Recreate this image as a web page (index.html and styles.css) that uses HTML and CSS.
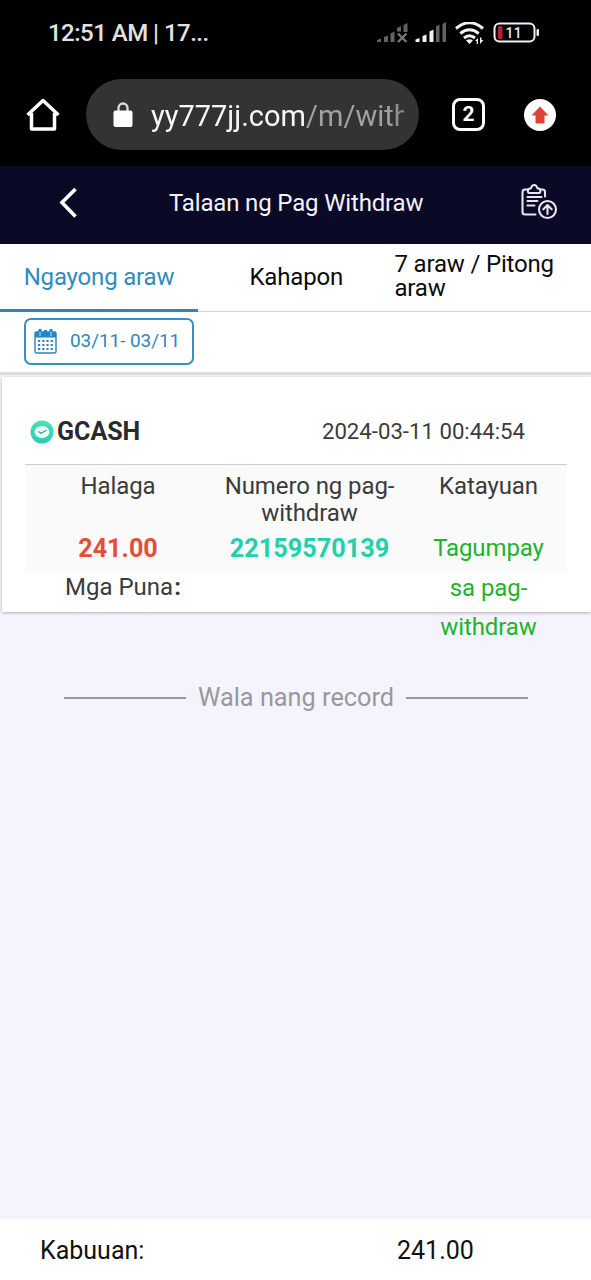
FILE: index.html
```html
<!DOCTYPE html>
<html lang="fil">
<head>
<meta charset="utf-8">
<title>Talaan ng Pag Withdraw</title>
<link rel="stylesheet" href="styles.css">
</head>
<body>
<div class="screen">
  <div class="status-bar">
    <span class="clock">12:51 AM | 17...</span>
    <svg class="status-icons" width="164" height="26" viewBox="0 0 164 26">
      <g fill="#626262">
        <path d="M1 18l4-1.500V20H1zM8 15l4-1.500V20H8zM14.500 11.500l4-2V20h-4zM21 6l4-2v5.500h-4zM27.500 3l4-2v9h-4z"/>
        <path d="M22 11.500l8.500 8.500M30.500 11.500L22 20" stroke="#777" stroke-width="2.400"/>
        <path d="M60 4.500l3.500-2V20H60zM66.500 2l3.500-2v20h-3.500z"/>
      </g>
      <path fill="#f2f2f2" d="M39.500 17.500l4-1.500v4h-4zM46.500 14l4-1.500V20h-4zM53.500 9.500l4-2V20h-4z"/>
      <g fill="none" stroke="#f2f2f2" stroke-width="3">
        <path d="M80 6.500Q93.500-5 107 6.500"/>
        <path d="M84.300 11.500Q93.500 4 102.700 11.500"/>
        <path d="M88 16Q93.500 11.500 99 16"/>
      </g>
      <path fill="#f2f2f2" d="M90 18.500q3.500-2.500 7 0L93.500 22zM99 19l3-3v6h-1.300v-3zM104 15.500V22l3.500-4h-2v-2.500z"/>
      <rect x="118.500" y="1.500" width="40" height="18" rx="5" fill="none" stroke="#f2f2f2" stroke-width="2"/>
      <rect x="122" y="4" width="4.500" height="13" rx="1.500" fill="#bd1f32"/>
      <rect x="160.500" y="7" width="2.500" height="7" rx="1" fill="#f2f2f2"/>
      <text class="battery-level" x="129.500" y="16">11</text>
    </svg>
  </div>

  <div class="browser-bar">
    <svg class="home" width="34" height="36" viewBox="0 0 34 36">
      <path d="M1.500 18L17 3.500 32.500 18M5.500 16V32h23V16" fill="none" stroke="#fff" stroke-width="3.500" stroke-linejoin="round"/>
    </svg>
    <div class="address">
      <svg class="lock" width="20" height="26" viewBox="0 0 20 26">
        <path d="M5.500 10V6a4.500 4.500 0 0 1 9 0v4" fill="none" stroke="#ddd" stroke-width="2.300"/>
        <rect x=".5" y="8.500" width="19" height="16.500" rx="2" fill="#fff"/>
      </svg>
      <div class="url">yy777jj.com<span class="url-path">/m/with</span></div>
    </div>
    <div class="tab-count">2</div>
    <svg class="update" width="32" height="32" viewBox="0 0 32 32">
      <circle cx="16" cy="16" r="16" fill="#fff"/>
      <path d="M16 7.500l8.500 9H20.500v8h-9v-8H7.500z" fill="#dc4437"/>
    </svg>
  </div>

  <header class="page-header">
    <svg class="back" width="20" height="32" viewBox="0 0 20 32">
      <path d="M17.500 2L4 15.500 17.500 29.500" fill="none" stroke="#fff" stroke-width="3.600"/>
    </svg>
    <h1 class="title">Talaan ng Pag Withdraw</h1>
    <svg class="report" width="37" height="37" viewBox="0 0 37 37">
      <g fill="none" stroke="#e6e6f2" stroke-width="2.100" stroke-linecap="round" stroke-linejoin="round">
        <path d="M7 5.500H4Q1.500 5.500 1.500 8.500V28Q1.500 30.500 4 30.500H14.500"/>
        <path d="M19 5.500h2.500Q24 5.500 24 8v4.500"/>
        <path d="M7 8V5.500L10 4Q11 1 13.200 1T16.300 4l3 1.500V8Q19.300 9 18 9H8.500Q7 9 7 8z"/>
        <path d="M6.500 13h14M6.500 17h10M6.500 21.500h7"/>
        <circle cx="26.500" cy="25.500" r="8.500"/>
        <path d="M26.500 30V21.500M22.300 25.200L26.500 21l4.200 4.200"/>
      </g>
    </svg>
  </header>

  <nav class="tabs">
    <div class="tab active"><span class="tab-today">Ngayong araw</span></div>
    <div class="tab"><span class="tab-yesterday">Kahapon</span></div>
    <div class="tab tab-week"><span>7 araw / Pitong<br>araw</span></div>
  </nav>

  <div class="filter">
    <div class="date-range">
      <svg width="23" height="25" viewBox="0 0 23 25">
        <rect x="1" y="3" width="21" height="21" rx="1.500" fill="#fff" stroke="#2b83b8" stroke-width="1.400"/>
        <path d="M1 3h21v5.500H1z" fill="#2387c8"/>
        <path d="M6 0v6M11.500 1v4M17 0v6" stroke="#2387c8" stroke-width="3"/>
        <path d="M6 3v4M17 3v4" stroke="#a9d8f4" stroke-width="1.200"/>
        <path d="M4 12h16M4 16h16M4 20h16" stroke="#2b83b8" stroke-width="2" stroke-dasharray="2.200 2"/>
      </svg>
      <span class="dates">03/11- 03/11</span>
    </div>
  </div>

  <main class="content">
    <section class="record">
      <div class="record-head">
        <svg width="24" height="24" viewBox="0 0 24 24">
          <defs><linearGradient id="mint" x1="0" y1="0" x2="0" y2="1"><stop offset="0" stop-color="#48e3b0"/><stop offset="1" stop-color="#26cdbb"/></linearGradient></defs>
          <circle cx="12" cy="12" r="11.500" fill="url(#mint)"/>
          <ellipse cx="12" cy="12" rx="7.500" ry="6" fill="#effff9"/>
          <path d="M8.500 11.500l2.500 1.700 5.500-3" fill="none" stroke="#3b9b87" stroke-width="1.300"/>
        </svg>
        <strong class="method">GCASH</strong>
        <time class="time">2024-03-11 00:44:54</time>
      </div>
      <div class="details">
        <div class="col"><div class="label">Halaga</div><div class="value amount">241.00</div></div>
        <div class="col col-number"><div class="label label-number">Numero ng pag-withdraw</div><div class="value number">22159570139</div></div>
        <div class="col col-status"><div class="label">Katayuan</div><div class="value state">Tagumpay sa pag-withdraw</div></div>
      </div>
      <div class="remarks">Mga Puna<span class="colon">:</span></div>
    </section>
    <div class="no-more"><i class="rule"></i><span class="no-more-text">Wala nang record</span><i class="rule"></i></div>
  </main>

  <footer class="totals">
    <span class="total-label">Kabuuan:</span>
    <span class="total-value">241.00</span>
  </footer>
</div>
</body>
</html>
```

FILE: styles.css
```css
* { box-sizing: border-box; }
body { margin: 0; font-family: Roboto, "Liberation Sans", sans-serif; color: #111; }
svg { display: block; flex: none; }
span, strong, time { white-space: nowrap; }
.screen { width: 591px; height: 1280px; display: flex; flex-direction: column; overflow: hidden; background: #f5f4fe; }
.status-bar { height: 66px; flex: none; background: #000; display: flex; justify-content: space-between; padding: 0 51px 0 48px; }
.clock { font-size: 24px; line-height: 28px; margin-top: 19px; color: #e2e2e2; letter-spacing: -.52px; font-weight: 500; }
.status-icons { margin-top: 22px; }
.battery-level { font: 500 14px Roboto, sans-serif; fill: #e8e8e8; letter-spacing: .4px; }
.browser-bar { height: 100px; flex: none; background: #000; display: flex; align-items: center; padding: 0 35px 3px 26px; }
.address { width: 333px; height: 71px; margin-left: 26px; border-radius: 36px; background: #333; display: flex; align-items: center; padding: 0 14px 0 27px; }
.url { width: 253px; margin-left: 18px; padding-top: 2px; overflow: hidden; white-space: nowrap; font-size: 29px; line-height: 38px; color: #f7f7f7; -webkit-mask-image: linear-gradient(90deg, #000 94%, rgba(0,0,0,.7)); mask-image: linear-gradient(90deg, #000 94%, rgba(0,0,0,.7)); }
.url-path { color: #a2a2a2; }
.tab-count { width: 33px; height: 33px; margin-left: 33px; border: 3.500px solid #fff; border-radius: 8px; color: #fff; font-size: 21px; line-height: 26px; font-weight: 700; text-align: center; }
.update { margin-left: auto; }
.page-header { height: 78px; flex: none; background: #0a0926; display: flex; align-items: center; padding: 0 33px 4px 58px; }
.title { margin: 0 0 0 91px; font-size: 24px; line-height: 28px; font-weight: 400; letter-spacing: -.16px; color: #f3f3fa; white-space: nowrap; }
.report { margin: 0 0 2px auto; }
.tabs { height: 68px; flex: none; background: #fff; display: grid; grid-template-columns: repeat(3, 1fr); font-size: 24px; line-height: 24px; letter-spacing: -.18px; color: #0c0c0c; }
.tab { display: flex; align-items: center; justify-content: center; padding-bottom: 2px; border-bottom: 1px solid #d5d5d5; }
.tab.active { color: #318bc2; border-bottom: 3px solid #2b87bd; width: 198px; padding: 0; }
.tab.tab-week { justify-content: flex-start; padding: 0 0 4px; }
.filter { height: 63px; flex: none; background: #fff; padding: 6px 24px 0; border-bottom: 3px solid #dcdcdc; }
.date-range { width: 170px; height: 47px; border: 2px solid #398fc1; border-radius: 7px; display: flex; align-items: center; padding: 0 0 1px 8px; color: #3188bb; }
.dates { margin-left: 13px; font-size: 19px; line-height: 24px; letter-spacing: -.08px; }
.content { flex: 1; }
.record { height: 235px; margin: 2px 0 0 2px; background: #fff; box-shadow: 0 1px 3px rgba(0,0,0,.28); padding: 0 24px 0 23px; color: #3b3b3b; }
.record-head { height: 88px; display: flex; align-items: center; padding: 22px 42px 0 5px; border-bottom: 1px solid #cdcdcd; }
.method { font-size: 25px; line-height: 28px; margin-left: 3px; color: #2a2a2a; }
.time { margin-left: auto; font-size: 22.2px; line-height: 28px; margin-bottom: 1px; }
.details { height: 108px; background: #fafafa; display: grid; grid-template-columns: 184px 199px 159px; text-align: center; padding: 8px 0 0 1px; }
.label { font-size: 24px; line-height: 27px; height: 56px; letter-spacing: -.1px; }
.value { font-size: 24px; line-height: 39.5px; font-weight: 700; }
.amount { color: #e54e34; font-size: 25.2px; }
.number { color: #24d0ac; font-size: 25.3px; }
.col-status { position: relative; z-index: 1; }
.state { color: #21b32c; font-weight: 400; letter-spacing: -.1px; width: 126px; margin: 0 auto; }
.remarks { padding: 1px 0 0 40px; font-size: 24px; line-height: 27px; }
.colon { margin-left: 1px; font-weight: 700; }
.no-more { display: flex; align-items: center; justify-content: center; margin-top: 70px; padding-left: 1px; color: #999; }
.no-more-text { font-size: 25.3px; line-height: 32px; margin: 0 12px; }
.rule { width: 122px; height: 2px; background: #999; }
.totals { height: 61px; flex: none; background: #fff; display: grid; grid-template-columns: 357px 1fr; align-items: center; padding: 3px 38px 0 40px; font-size: 25px; line-height: 28px; color: #111; }
```
